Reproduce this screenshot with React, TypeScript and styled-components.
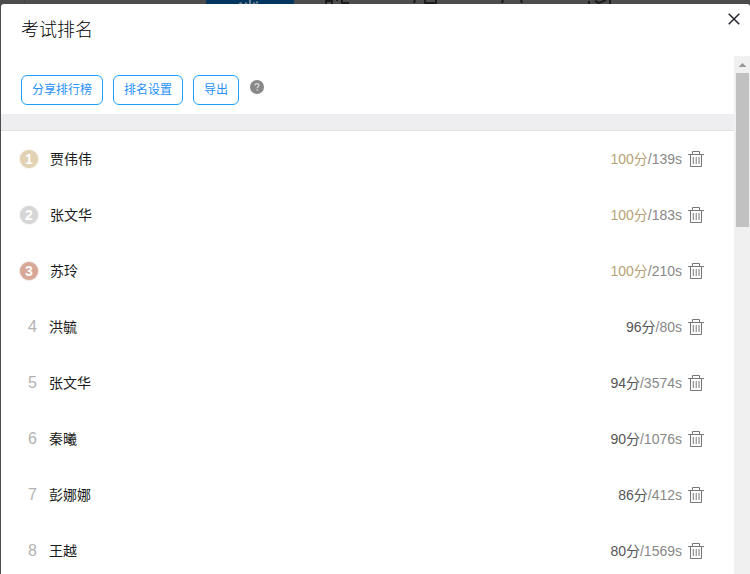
import React from "react";
import styled, { createGlobalStyle } from "styled-components";

const GlobalStyle = createGlobalStyle`
  * { box-sizing: border-box; }
  body {
    margin: 0;
    background: #4c4c4c;
    color: #1a1b20;
    font-family: "Liberation Sans", "Noto Sans CJK SC", sans-serif;
    font-size: 14px;
  }
  button { font-family: inherit; cursor: pointer; }
`;

const Page = styled.div`
  display: flex;
  flex-direction: column;
  height: 100vh;
  overflow: hidden;
`;

const Backdrop = styled.div`
  display: flex;
  flex: none;
  height: 4px;
  overflow: hidden;
`;

const BackdropSide = styled.div`
  flex: none;
  width: 25px;
  border-right: 1px solid #414141;
`;

const BackdropNav = styled.div`
  display: flex;
  flex: none;
  margin-left: 181px;
`;

const NavItem = styled.div<{ $active?: boolean }>`
  width: 88px;
  height: 4px;
  background: ${(p) => (p.$active ? "#003660" : "transparent")};
  color: ${(p) => (p.$active ? "#6d7f8f" : "#1c1c1c")};
  svg { display: block; margin: 0 auto; }
`;

const Dialog = styled.section`
  display: flex;
  flex: 1;
  flex-direction: column;
  min-height: 0;
  margin-left: 1px;
  background: #fff;
  border-radius: 3px 3px 0 0;
`;

const Header = styled.header`
  display: flex;
  flex: none;
  justify-content: space-between;
  align-items: flex-start;
  height: 52px;
  padding-left: 20px;
`;

const Title = styled.h1`
  margin: 0;
  color: #000;
  font-size: 18px;
  font-weight: 300;
  line-height: 52px;
`;

const IconButton = styled.button`
  display: flex;
  align-items: center;
  justify-content: center;
  padding: 0;
  border: 0;
  background: none;
`;

const CloseButton = styled(IconButton)`
  width: 32px;
  height: 30px;
  color: #25252f;
`;

const Body = styled.div`
  display: flex;
  flex: 1;
  min-height: 0;
`;

const Content = styled.div`
  flex: 1;
  min-width: 0;
  overflow: hidden;
`;

const Toolbar = styled.div`
  display: flex;
  gap: 10px;
  padding: 19px 20px 9px;
`;

const ActionButton = styled.button`
  height: 30px;
  padding: 0 10px;
  border: 1px solid #1e9fff;
  border-radius: 6px;
  background: #fff;
  color: #2590fa;
  font-size: 12px;
  line-height: 28px;
`;

const HelpButton = styled(IconButton)`
  width: 16px;
  height: 24px;
`;

const Divider = styled.div`
  height: 17px;
  border-bottom: 1px solid #e2e2e4;
  background: #eeeef0;
`;

const Ranking = styled.ol`
  margin: 0;
  padding: 0;
  list-style: none;
`;

const Row = styled.li`
  display: flex;
  align-items: center;
  height: 56px;
  padding: 0 30px 0 19px;
  line-height: 18px;
`;

const Rank = styled.span`
  width: 29px;
  padding-left: 8px;
  color: #b2b2b2;
  font-size: 16px;
`;

const MedalSlot = styled.span`
  width: 30px;
`;

const Medal = styled.span<{ $color: string }>`
  display: block;
  width: 18px;
  height: 18px;
  border-radius: 50%;
  background: ${(p) => p.$color};
  box-shadow: 0 0 2px ${(p) => p.$color};
  color: #fff;
  font-weight: 700;
  text-align: center;
`;

const Name = styled.span`
  flex: 1;
`;

const Result = styled.span`
  margin-right: 6px;
  color: #888;
`;

const Score = styled.span<{ $top: boolean }>`
  color: ${(p) => (p.$top ? "#b7a175" : "#555")};
`;

const Scrollbar = styled.div`
  display: flex;
  flex: none;
  flex-direction: column;
  align-items: center;
  width: 16px;
  background: #f0f0f0;
`;

const ScrollArrow = styled.svg`
  flex: none;
  width: 16px;
  height: 17px;
`;

const Thumb = styled.div`
  width: 13px;
  height: 154px;
  background: #c1c1c1;
`;

const medals = ["#e1d2b3", "#d6d6d6", "#d7a898"];

const results = [
  { name: "贾伟伟", score: 100, seconds: 139 },
  { name: "张文华", score: 100, seconds: 183 },
  { name: "苏玲", score: 100, seconds: 210 },
  { name: "洪毓", score: 96, seconds: 80 },
  { name: "张文华", score: 94, seconds: 3574 },
  { name: "秦曦", score: 90, seconds: 1076 },
  { name: "彭娜娜", score: 86, seconds: 412 },
  { name: "王越", score: 80, seconds: 1569 },
];

const navShapes = [
  "M3 4l3-1 M9 3l2 1 M14 0v4 M17 3l2 1 M20 2l2 1",
  "M2 4V1h6v3 M12 0h2 M18 0v3h7",
  "M2 3l1-3 M13 0v3h11V0",
  "M2 3l1-3 M21 0l1 3",
  "M1 4V1 M7 1l4 2 7-3 M22 0v4",
];

const TrashIcon = () => (
  <svg width="16" height="16" viewBox="0 0 16 16" fill="none" stroke="#777" aria-hidden="true">
    <path d="M0 3.5h16M4.5 3V.5h7V3M2.5 4v11.5h11V4M5.3 6v7M8.2 6v7M11 6v7" />
  </svg>
);

export default function App() {
  return (
    <Page>
      <GlobalStyle />
      <Backdrop aria-hidden="true">
        <BackdropSide />
        <BackdropNav>
          {navShapes.map((d, i) => (
            <NavItem key={d} $active={i === 0}>
              <svg width="28" height="4" viewBox="0 0 28 4" fill="none" stroke="currentColor" strokeWidth="2">
                <path d={d} />
              </svg>
            </NavItem>
          ))}
        </BackdropNav>
      </Backdrop>
      <Dialog role="dialog" aria-labelledby="ranking-title">
        <Header>
          <Title id="ranking-title">考试排名</Title>
          <CloseButton type="button" aria-label="关闭">
            <svg width="12" height="12" viewBox="0 0 12 12" fill="none" stroke="currentColor" strokeWidth="1.5">
              <path d="M.7.7l10.6 10.6M11.3.7L.7 11.3" />
            </svg>
          </CloseButton>
        </Header>
        <Body>
          <Content>
            <Toolbar>
              <ActionButton type="button">分享排行榜</ActionButton>
              <ActionButton type="button">排名设置</ActionButton>
              <ActionButton type="button">导出</ActionButton>
              <HelpButton type="button" aria-label="帮助">
                <svg width="14" height="14" viewBox="0 0 14 14" fill="none" aria-hidden="true">
                  <circle cx="7" cy="7" r="7" fill="#888" />
                  <path d="M5 5.5C5 4.3 5.8 3.6 7 3.6s2 .7 2 1.7C9 6.5 7.2 6.6 7.2 8.2" stroke="#ddd" strokeWidth="1.2" />
                  <circle cx="7.2" cy="10.1" r=".8" fill="#ddd" />
                </svg>
              </HelpButton>
            </Toolbar>
            <Divider />
            <Ranking>
              {results.map((r, i) => (
                <Row key={i}>
                  {i < medals.length ? (
                    <MedalSlot>
                      <Medal $color={medals[i]}>{i + 1}</Medal>
                    </MedalSlot>
                  ) : (
                    <Rank>{i + 1}</Rank>
                  )}
                  <Name>{r.name}</Name>
                  <Result>
                    <Score $top={i < medals.length}>{r.score}分</Score>/{r.seconds}s
                  </Result>
                  <IconButton type="button" aria-label={`删除 ${r.name}`}>
                    <TrashIcon />
                  </IconButton>
                </Row>
              ))}
            </Ranking>
          </Content>
          <Scrollbar aria-hidden="true">
            <ScrollArrow viewBox="0 0 16 17">
              <path d="M4.5 11L8.5 7l4 4z" fill="#999" />
            </ScrollArrow>
            <Thumb />
          </Scrollbar>
        </Body>
      </Dialog>
    </Page>
  );
}
